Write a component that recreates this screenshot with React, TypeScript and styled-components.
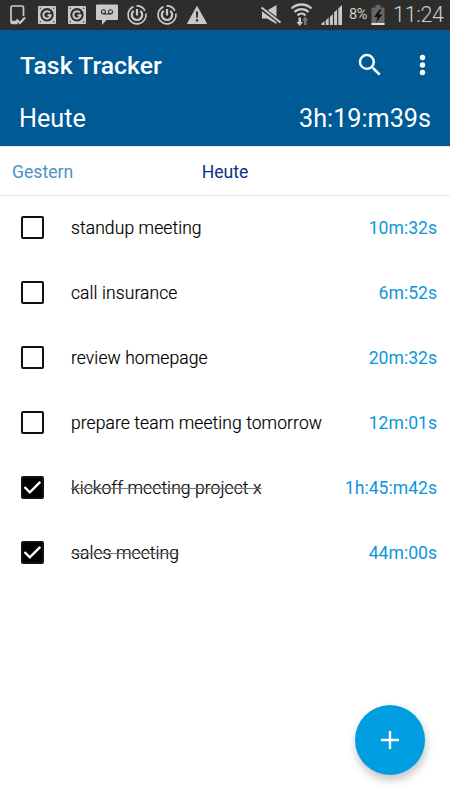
import React from "react";
import styled, { createGlobalStyle } from "styled-components";

const GlobalStyle = createGlobalStyle`
  * { box-sizing: border-box; }
  body { margin: 0; background: #fff; font-family: Roboto, "Noto Sans", sans-serif; }
`;

const Screen = styled.div`
  position: relative;
  width: 450px;
  height: 800px;
  display: flex;
  flex-direction: column;
  overflow: hidden;
  background: #fff;
`;

const StatusBar = styled.div`
  height: 30px;
  flex: none;
  display: flex;
  align-items: center;
  justify-content: space-between;
  padding: 0 7px 0 2px;
  background: #2d2d2b;
  color: #cfcfcf;
`;

const StatusGroup = styled.div`
  display: flex;
  align-items: center;
  height: 30px;
`;

const Slot = styled.svg`
  display: block;
  width: 30px;
  height: 30px;
  flex: none;
`;

const Battery = styled.svg`
  display: block;
  width: 14px;
  height: 30px;
  margin: 0 8px 0 3px;
`;

const Percent = styled.span`
  width: 19px;
  margin-left: 3px;
  font-size: 14.5px;
  line-height: 32px;
  letter-spacing: -0.4px;
  white-space: nowrap;
`;

const Clock = styled.span`
  font-size: 21.5px;
  line-height: 32px;
  font-weight: 300;
  width: 50px;
  white-space: nowrap;
  letter-spacing: -0.3px;
`;

const Header = styled.header`
  height: 116px;
  flex: none;
  background: #005a96;
  color: #fff;
`;

const Toolbar = styled.div`
  height: 72px;
  display: flex;
  align-items: center;
  padding: 0 13px 0 20px;
`;

const Title = styled.h1`
  flex: 1;
  margin: 0;
  font-size: 24.8px;
  line-height: 30px;
  font-weight: 500;
`;

const IconButton = styled.button<{ $gap?: number }>`
  display: block;
  padding: 0;
  border: 0;
  background: none;
  margin: 0 0 2px ${(p) => p.$gap ?? 0}px;
  svg { display: block; }
`;

const Summary = styled.div`
  height: 44px;
  display: flex;
  justify-content: space-between;
  padding: 0 19px;
  font-size: 25.2px;
  line-height: 34px;
  font-weight: 400;
`;

const Tabs = styled.nav`
  height: 50px;
  flex: none;
  display: grid;
  grid-template-columns: 1fr 1fr 1fr;
  align-items: center;
  padding: 1px 12px 0;
  border-top: 1px solid #dfe5ec;
  border-bottom: 1px solid #e9e9e9;
`;

const Tab = styled.a<{ $active?: boolean }>`
  font-size: 17.6px;
  line-height: 24px;
  font-weight: 400;
  color: ${(p) => (p.$active ? "#0a3288" : "#4a94c2")};
  text-align: ${(p) => (p.$active ? "center" : "left")};
`;

const List = styled.ul`
  flex: 1;
  margin: -1px 0 0;
  padding: 0;
  list-style: none;
`;

const Row = styled.li`
  height: 65px;
  display: flex;
  align-items: center;
  padding: 0 13px 0 21px;
`;

const Box = styled.svg`
  display: block;
  width: 23px;
  height: 23px;
  margin: 0 27px 1px 0;
`;

const Label = styled.span<{ $done: boolean }>`
  font-size: 17.5px;
  line-height: 24px;
  font-weight: 300;
  letter-spacing: 0.09px;
  color: #000;
  -webkit-text-stroke: 0.2px #000;
  text-decoration: ${(p) => (p.$done ? "line-through #777 1px" : "none")};
`;

const Time = styled.span`
  margin-left: auto;
  font-size: 17.6px;
  line-height: 24px;
  font-weight: 400;
  color: #0e96dd;
`;

const Fab = styled.button`
  position: absolute;
  right: 25px;
  bottom: 25px;
  width: 70px;
  height: 70px;
  padding: 0;
  border: 0;
  border-radius: 50%;
  background: #009de0;
  box-shadow: 1px 5px 10px rgba(0, 0, 0, 0.24);
  display: flex;
  align-items: center;
  justify-content: center;
`;

const ink = "#c9c9c9";

const DeviceIcon = () => (
  <Slot viewBox="0 0 30 30" fill="none" stroke={ink}>
    <path d="M21.500 16V7.500a1.500 1.500 0 0 0-1.500-1.500H10.500a1.500 1.500 0 0 0-1.500 1.500v14.500a1.500 1.500 0 0 0 1.500 1.500h5" strokeWidth="1.700" />
    <path d="M9 22.200h6.500" strokeWidth="3" />
    <path d="M14.500 19.500l3.500 3.500 5-5.500" strokeWidth="2.200" />
  </Slot>
);

const GIcon = () => (
  <Slot viewBox="0 0 30 30">
    <rect x="6" y="6" width="18" height="18" rx="1" fill={ink} />
    <g fill="#2d2d2b">
      <circle cx="8.300" cy="8.300" r=".7" />
      <circle cx="21.700" cy="8.300" r=".7" />
      <circle cx="8.300" cy="21.700" r=".7" />
      <circle cx="21.700" cy="21.700" r=".7" />
    </g>
    <circle cx="15" cy="14.800" r="6.700" fill="#2d2d2b" />
    <path d="M18 12.700a3.700 3.700 0 1 0 .7 2.500h-3.200" fill="none" stroke={ink} strokeWidth="2" />
  </Slot>
);

const VoicemailIcon = () => (
  <Slot viewBox="0 0 30 30">
    <path d="M5 4.500h20a1 1 0 0 1 1 1V19a1 1 0 0 1-1 1H14.500L10 25v-5H5a1 1 0 0 1-1-1V5.500a1 1 0 0 1 1-1z" fill={ink} />
    <g fill="none" stroke="#2d2d2b" strokeWidth="1.100">
      <circle cx="11.500" cy="11.800" r="2" />
      <circle cx="18.500" cy="11.800" r="2" />
      <path d="M11.500 14h7" />
    </g>
  </Slot>
);

const TimerIcon = () => (
  <Slot viewBox="0 0 30 30" fill="none" stroke={ink}>
    <path d="M11.500 6.600A9 9 0 1 0 23.900 13.500M22.900 10.800A9 9 0 0 0 14.500 5.800" strokeWidth="1.700" />
    <path d="M11.700 10.800a5.200 5.200 0 1 0 6.600 0" strokeWidth="2.200" />
    <path d="M15 9v6.500" strokeWidth="2.200" />
  </Slot>
);

const WarningIcon = () => (
  <Slot viewBox="0 0 30 30">
    <path d="M15 6.500L24.500 23.500H5.500z" fill={ink} stroke={ink} strokeLinejoin="round" />
    <path d="M13.800 11.500h2.400l-.5 6.500h-1.400zM13.900 19.300h2.200v2.200h-2.200z" fill="#2d2d2b" />
  </Slot>
);

const MuteIcon = () => (
  <Slot viewBox="0 0 30 30">
    <path d="M6 10.500h5l9.500-5.500v19L11 18.500H6z" fill={ink} />
    <path d="M5 7.800L25 22.800" stroke="#2d2d2b" strokeWidth="4.200" />
    <path d="M5.500 7.500L24.500 22.500" stroke={ink} strokeWidth="2" />
  </Slot>
);

const WifiIcon = () => (
  <Slot viewBox="0 0 30 30">
    <g fill="none" stroke={ink} strokeWidth="2.300">
      <path d="M5.500 8.500a14.500 14.500 0 0 1 20 0" />
      <path d="M8.500 12a10 10 0 0 1 14 0" />
      <path d="M11.500 15.300a5.800 5.800 0 0 1 8 0" />
    </g>
    <path d="M12.500 17.500H15V22h2L13.700 26 10.500 22h2z" fill={ink} />
    <path d="M18 25v-4.500h-2L19.300 16.500 22.500 20.500h-2V25z" fill="#777" />
  </Slot>
);

const SignalIcon = () => (
  <Slot viewBox="0 0 30 30" fill={ink}>
    <path d="M5.500 25v-1.500l3-2.500V25zM9.700 25v-4.500l3-3V25zM13.900 25v-8l3-3V25zM18.100 25V12.500l3-3V25zM22.300 25V8.500L26 5V25z" />
  </Slot>
);

const tasks = [
  { label: "standup meeting", time: "10m:32s", done: false },
  { label: "call insurance", time: "6m:52s", done: false },
  { label: "review homepage", time: "20m:32s", done: false },
  { label: "prepare team meeting tomorrow", time: "12m:01s", done: false },
  { label: "kickoff meeting project x", time: "1h:45:m42s", done: true },
  { label: "sales meeting", time: "44m:00s", done: true },
];

const Checkbox = ({ done }: { done: boolean }) => (
  <Box viewBox="0 0 23 23">
    <rect x="1" y="1" width="21" height="21" rx="1" fill={done ? "#000" : "#fff"} stroke="#111" strokeWidth="2" />
    {done && <path d="M3.500 11l5.300 5.300L19.300 5.800" fill="none" stroke="#fff" strokeWidth="2.400" />}
  </Box>
);

export default function App() {
  return (
    <>
      <GlobalStyle />
      <Screen>
        <StatusBar>
          <StatusGroup>
            <DeviceIcon />
            <GIcon />
            <GIcon />
            <VoicemailIcon />
            <TimerIcon />
            <TimerIcon />
            <WarningIcon />
          </StatusGroup>
          <StatusGroup>
            <MuteIcon />
            <WifiIcon />
            <SignalIcon />
            <Percent>8%</Percent>
            <Battery viewBox="0 0 14 30">
              <path d="M4.500 5h5v2.500H13.500V25H.5V7.500h4z" fill="#666" />
              <path d="M9 9L3 17h3.500L5 22.500l6.500-8H7.800L10.500 9z" fill="#111" />
              <path d="M.5 23h13v2H.5z" fill="#e0e0e0" />
            </Battery>
            <Clock>11:24</Clock>
          </StatusGroup>
        </StatusBar>
        <Header>
          <Toolbar>
            <Title>Task Tracker</Title>
            <IconButton aria-label="Search">
              <svg width="30" height="30" viewBox="0 0 24 24" fill="#fff">
                <path d="M15.500 14h-.79l-.28-.27A6.470 6.470 0 0 0 16 9.500 6.500 6.500 0 1 0 9.500 16c1.610 0 3.090-.59 4.230-1.570l.27.28v.79l5 4.990L20.490 19l-4.990-5zm-6 0C7.010 14 5 11.990 5 9.500S7.010 5 9.500 5 14 7.010 14 9.500 11.990 14 9.500 14z" />
              </svg>
            </IconButton>
            <IconButton aria-label="More" $gap={22}>
              <svg width="30" height="30" viewBox="0 0 30 30" fill="#fff">
                <circle cx="15.500" cy="7.500" r="2.700" />
                <circle cx="15.500" cy="15" r="2.700" />
                <circle cx="15.500" cy="22.500" r="2.700" />
              </svg>
            </IconButton>
          </Toolbar>
          <Summary>
            <span>Heute</span>
            <span>3h:19:m39s</span>
          </Summary>
        </Header>
        <Tabs>
          <Tab>Gestern</Tab>
          <Tab $active>Heute</Tab>
        </Tabs>
        <List>
          {tasks.map((t) => (
            <Row key={t.label}>
              <Checkbox done={t.done} />
              <Label $done={t.done}>{t.label}</Label>
              <Time>{t.time}</Time>
            </Row>
          ))}
        </List>
        <Fab aria-label="Add">
          <svg width="18" height="18" viewBox="0 0 18 18">
            <path d="M9 0v18M0 9h18" stroke="#fff" strokeWidth="2.400" />
          </svg>
        </Fab>
      </Screen>
    </>
  );
}
